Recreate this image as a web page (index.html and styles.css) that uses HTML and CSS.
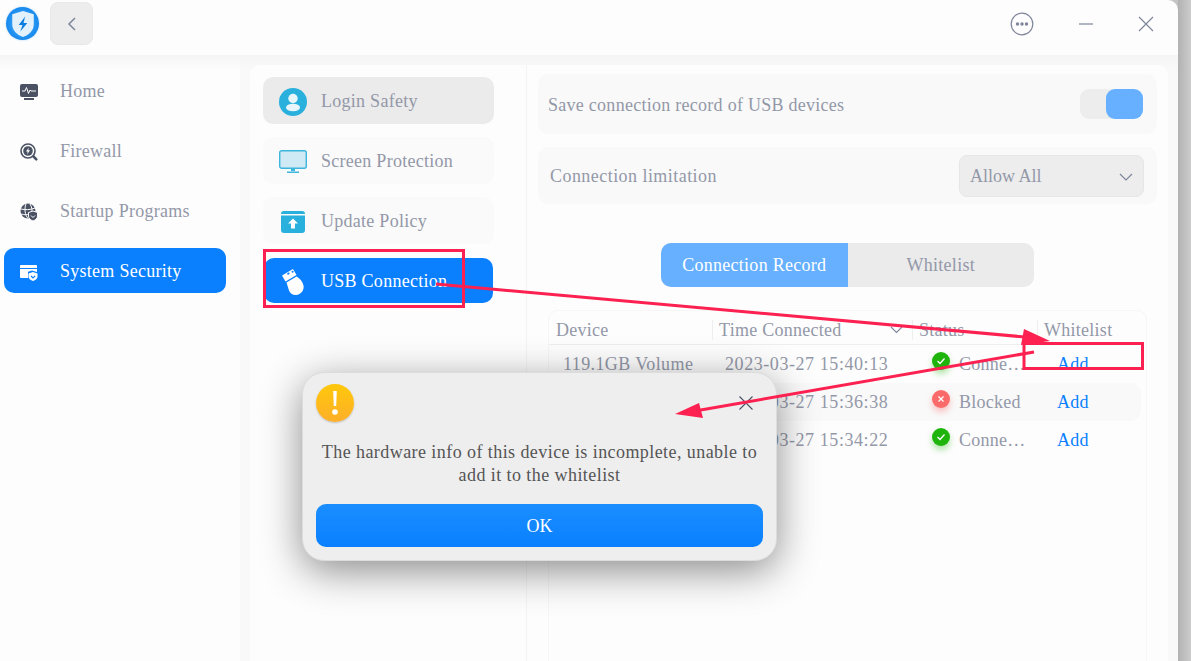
FILE: index.html
```html
<!DOCTYPE html>
<html lang="en">
<head>
    <meta charset="UTF-8">
    <title>System Security</title>
    <link rel="stylesheet" href="styles.css">
</head>
<body>
    <div class="window">
        <header class="titlebar">
            <div class="logo">
                <svg width="26" height="28" viewBox="0 0 24 26"><path d="M12 1l10 3v9c0 6-4 10-10 12C6 23 2 19 2 13V4z" fill="#e3f1fd"/><path d="M14 6l-6 8h3.5l-2 6 6.500-8h-3.500z" fill="#0a7fe0"/></svg>
            </div>
            <button class="back-btn">
                <svg width="10" height="16" viewBox="0 0 10 16"><path d="M8 2L2 8l6 6" fill="none" stroke="#7f869b" stroke-width="1.5"/></svg>
            </button>
            <div class="window-controls">
                <svg width="24" height="24" viewBox="0 0 24 24"><circle cx="12" cy="12" r="10.8" fill="none" stroke="#7f869b" stroke-width="1.2"/><circle cx="7.5" cy="12" r="1.7" fill="#7f869b"/><circle cx="12" cy="12" r="1.7" fill="#7f869b"/><circle cx="16.5" cy="12" r="1.7" fill="#7f869b"/></svg>
                <svg width="16" height="16" viewBox="0 0 16 16"><path d="M1 8h14" stroke="#7f869b" stroke-width="1.2"/></svg>
                <svg width="16" height="16" viewBox="0 0 16 16"><path d="M1 1l14 14M15 1L1 15" stroke="#7f869b" stroke-width="1.2"/></svg>
            </div>
        </header>
        <div class="content">
            <nav class="sidebar">
                <a class="nav-item">
                    <svg width="18" height="18" viewBox="0 0 18 18"><rect x="0" y="1" width="18" height="13" rx="2" fill="#4a5163"/><path d="M2 8h3l1.500-3.500 2 6 1.500-3.500 1 1h5" fill="none" stroke="#fff" stroke-width="1"/><path d="M4 15h10v2H4z" fill="#4a5163"/></svg>
                    Home
                </a>
                <a class="nav-item">
                    <svg width="18" height="18" viewBox="0 0 18 18"><circle cx="8" cy="8" r="7" fill="none" stroke="#4a5163" stroke-width="1.6"/><circle cx="8" cy="8" r="4.8" fill="#4a5163"/><path d="M8.800 4.500L6 8.500h1.800l-.8 3 3-4.200H8.200z" fill="#fff"/><path d="M13.500 13.500l2.800 2.800" stroke="#4a5163" stroke-width="2.5" stroke-linecap="round"/></svg>
                    Firewall
                </a>
                <a class="nav-item">
                    <svg width="18" height="18" viewBox="0 0 18 18"><circle cx="8" cy="8" r="7.5" fill="#4a5163"/><path d="M1 6c4 1 9 1 14-1M1 11c4 1 6 1 8 0M6 1C4 6 5 12 8 15.500M10 1c2 3 2 6 2 8" fill="none" stroke="#fdfdfd" stroke-width="1"/><path d="M13 8l4.500 1.500v3.500c0 2.500-2 4-4.500 5-2.500-1-4.500-2.500-4.500-5V9.500z" fill="#4a5163" stroke="#fdfdfd"/><path d="M11 12.500l2 2 2-2" fill="none" stroke="#fff"/></svg>
                    Startup Programs
                </a>
                <a class="nav-item active">
                    <svg width="18" height="18" viewBox="0 0 18 18"><path d="M1 2h15a1 1 0 0 1 1 1v2H0V3a1 1 0 0 1 1-1zM0 6h17v3l-5-1.500-4 1.300V15H1a1 1 0 0 1-1-1z" fill="#fff"/><path d="M13 9l4.500 1.500v3c0 2-2 3.500-4.500 4.500-2.500-1-4.500-2.500-4.500-4.500v-3z" fill="#fff"/><path d="M11 13l2 2 2.200-2.200" fill="none" stroke="#0a80ff" stroke-width="1.2"/></svg>
                    System Security
                </a>
            </nav>
            <section class="categories">
                <a class="cat-item selected">
                    <svg width="28" height="28" viewBox="0 0 28 28"><circle cx="14" cy="14" r="14" fill="#2ab0dc"/><circle cx="14" cy="10.500" r="4.700" fill="#e8f6fb"/><ellipse cx="14" cy="19.500" rx="7" ry="3.800" fill="#e8f6fb"/></svg>
                    Login Safety
                </a>
                <a class="cat-item">
                    <svg width="28" height="24" viewBox="0 0 28 24"><rect x="0.7" y="0.7" width="26.6" height="17.6" rx="2" fill="#cfeaf5" stroke="#3db6dd" stroke-width="1.4"/><path d="M12 19h4v2h-4zM8 21.500h12V23H8z" fill="#3db6dd"/></svg>
                    Screen Protection
                </a>
                <a class="cat-item">
                    <svg width="26" height="22" viewBox="0 0 26 22"><path d="M4 0h18a3 3 0 0 1 3 3H1a3 3 0 0 1 3-3z" fill="#2ab0dc"/><path d="M1 4.500h24V19a3 3 0 0 1-3 3H4a3 3 0 0 1-3-3z" fill="#2ab0dc"/><path d="M13 7.500l5 5h-3v5h-4v-5H8z" fill="#fff"/></svg>
                    Update Policy
                </a>
                <a class="cat-item active">
                    <svg width="24" height="28" viewBox="0 0 24 28"><path d="M1 7.500L12 1l3.500 6L4.500 13.500z" fill="#fff"/><path d="M6 5.500l2-1.200.8 1.400-2 1.200zM10.500 3.500l1.500-.9.800 1.400-1.500.9z" fill="#0a80ff"/><path d="M5.500 14.500L15.500 8.500c3 1.500 6 5 7 9 .7 4-1.500 8-6 9.300-4 .8-7.500-1-8.500-4.300z" fill="#fff"/></svg>
                    USB Connection
                </a>
            </section>
            <main class="details">
                <div class="setting-row save-row">
                    <span>Save connection record of USB devices</span>
                    <div class="toggle"><div class="toggle-knob"></div></div>
                </div>
                <div class="setting-row limit-row">
                    <span>Connection limitation</span>
                    <div class="select">
                        Allow All
                        <svg width="14" height="8" viewBox="0 0 14 8"><path d="M1 1l6 6 6-6" fill="none" stroke="#7f869b" stroke-width="1.2"/></svg>
                    </div>
                </div>
                <div class="tabs">
                    <div class="tab active">Connection Record</div>
                    <div class="tab">Whitelist</div>
                </div>
                <div class="record-table">
                    <div class="table-head">
                        <div class="col-device">Device</div>
                        <div class="col-time">Time Connected
                            <svg width="13" height="8" viewBox="0 0 13 8"><path d="M1 1l5.500 5.500L12 1" fill="none" stroke="#7f869b" stroke-width="1.1"/></svg>
                        </div>
                        <div class="col-status">Status</div>
                        <div class="col-list">Whitelist</div>
                    </div>
                    <div class="table-row">
                        <div class="col-device">119.1GB Volume</div>
                        <div class="col-time">2023-03-27 15:40:13</div>
                        <div class="col-status"><span class="dot ok"><svg width="10" height="8" viewBox="0 0 10 8"><path d="M1.500 4l2.500 2.500L8.500 1.500" fill="none" stroke="#fff" stroke-width="1.3"/></svg></span>Conne…</div>
                        <div class="col-list"><a class="add-link">Add</a></div>
                    </div>
                    <div class="table-row striped">
                        <div class="col-device">119.1GB Volume</div>
                        <div class="col-time">2023-03-27 15:36:38</div>
                        <div class="col-status"><span class="dot blocked"><svg width="8" height="8" viewBox="0 0 8 8"><path d="M1.500 1.500l5 5M6.500 1.500l-5 5" stroke="#fff" stroke-width="1.2"/></svg></span>Blocked</div>
                        <div class="col-list"><a class="add-link">Add</a></div>
                    </div>
                    <div class="table-row">
                        <div class="col-device">119.1GB Volume</div>
                        <div class="col-time">2023-03-27 15:34:22</div>
                        <div class="col-status"><span class="dot ok"><svg width="10" height="8" viewBox="0 0 10 8"><path d="M1.500 4l2.500 2.500L8.500 1.500" fill="none" stroke="#fff" stroke-width="1.3"/></svg></span>Conne…</div>
                        <div class="col-list"><a class="add-link">Add</a></div>
                    </div>
                </div>
            </main>
        </div>
    </div>

    <!-- annotations drawn on top of the screenshot -->
    <div class="dialog">
        <div class="dialog-top">
            <div class="warn-icon"><svg width="6" height="24" viewBox="0 0 6 24"><path d="M1.200 0h3.600l-.6 15H1.800z" fill="#fff"/><circle cx="3" cy="21" r="2.800" fill="#fff"/></svg></div>
            <svg class="dialog-close" width="14" height="14" viewBox="0 0 14 14"><path d="M0.500 0.500l13 13M13.500 0.500l-13 13" stroke="#4a5163" stroke-width="1.1"/></svg>
        </div>
        <p class="dialog-text">The hardware info of this device is incomplete, unable to add it to the whitelist</p>
        <button class="ok-btn">OK</button>
    </div>
    <svg class="annotations" width="1191" height="661" viewBox="0 0 1191 661">
        <g fill="none" stroke="#fc2150" stroke-width="3">
            <rect x="264.500" y="250.500" width="199" height="56"/>
            <rect x="1024" y="343.500" width="118.500" height="25"/>
        </g>
        <path d="M436 284L1036 338" stroke="#fc2150" stroke-width="3"/>
        <path d="M1050 341L1024 329 1021 345z" fill="#fc2150"/>
        <path d="M1034 352L695 411" stroke="#fc2150" stroke-width="3"/>
        <path d="M675 414L699 403 703 418z" fill="#fc2150"/>
    </svg>
</body>
</html>
```

FILE: styles.css
```css
html, body {
    margin: 0;
    height: 100%;
    overflow: hidden;
}
body {
    width: 1191px;
    height: 661px;
    position: relative;
    font-family: "Liberation Serif", serif;
    font-size: 18px;
    letter-spacing: 0.27px;
    background: linear-gradient(to right, #b2b2b2, #cccccc) right / 13px 100% no-repeat, #c4c4c4;
    color: #9398a8;
}
a {
    display: flex;
    align-items: center;
}
.window {
    width: 1178px;
    height: 661px;
    background: #fdfdfd;
    border-top-right-radius: 10px;
    display: flex;
    flex-direction: column;
}
.titlebar {
    height: 55px;
    flex: none;
    display: flex;
    align-items: center;
    padding: 0 24px 8px 6px;
    box-sizing: border-box;
}
.logo {
    width: 33px;
    height: 33px;
    border-radius: 50%;
    background: radial-gradient(circle, #2f9cf5 40%, #0f83ea 80%, #7cc4f5);
    box-shadow: 0 0 2px #9fd0f5;
    display: flex;
    align-items: center;
    justify-content: center;
}
.back-btn {
    width: 43px;
    height: 43px;
    margin-left: 11px;
    border: 1px solid #e8e8e8;
    border-radius: 8px;
    background: #ededed;
    padding: 0;
    display: flex;
    align-items: center;
    justify-content: center;
}
.window-controls {
    margin-left: auto;
    display: flex;
    align-items: center;
    gap: 44px;
}
.content {
    flex: 1;
    display: flex;
    background: linear-gradient(#f5f5f5, #f9f9f9 15px);
    padding-top: 10px;
    min-height: 0;
}
.sidebar {
    width: 240px;
    flex: none;
    margin-top: -10px;
    padding: 13px 14px 0 4px;
    box-sizing: border-box;
    background: linear-gradient(#f5f5f5, #fdfdfd 15px);
    display: flex;
    flex-direction: column;
    gap: 15px;
}
.nav-item {
    height: 45px;
    box-sizing: border-box;
    padding: 2px 0 0 16px;
    border-radius: 10px;
    gap: 22px;
}
.nav-item.active {
    background: #0a80ff;
    color: #fff;
}
.categories {
    width: 277px;
    flex: none;
    margin-left: 10px;
    padding: 12px 32px 0 13px;
    box-sizing: border-box;
    background: #fdfdfd;
    border-right: 1px solid #f4f4f4;
    border-top-left-radius: 10px;
    display: flex;
    flex-direction: column;
    gap: 13px;
}
.cat-item {
    height: 47px;
    box-sizing: border-box;
    background: #fafafa;
    border-radius: 10px;
    padding: 2px 0 0 16px;
    gap: 14px;
}
.cat-item svg {
    width: 28px;
}
.cat-item.selected {
    background: #ebebeb;
}
.cat-item.active {
    height: 45px;
    margin: 1px 1px 0;
    padding-left: 15px;
    background: #0a80ff;
    color: #fff;
}
.details {
    flex: 1;
    margin-right: 10px;
    background: #fdfdfd;
    border-top-right-radius: 10px;
    padding: 9px 11px 0 11px;
    min-width: 0;
}
.setting-row {
    background: #f9f9f9;
    border-radius: 10px;
    display: flex;
    align-items: center;
    justify-content: space-between;
}
.setting-row span {
    padding-top: 2px;
}
.save-row {
    height: 60px;
    padding: 0 14px 0 10px;
}
.limit-row {
    height: 57px;
    margin-top: 13px;
    padding: 0 13px 0 12px;
    letter-spacing: 0.45px;
}
.toggle {
    width: 63px;
    height: 30px;
    background: #ededed;
    border-radius: 9px;
    display: flex;
    justify-content: flex-end;
}
.toggle-knob {
    width: 37px;
    height: 30px;
    background: #66b0ff;
    border-radius: 9px;
}
.select {
    width: 185px;
    height: 42px;
    box-sizing: border-box;
    padding: 2px 10px 0;
    background: #ededed;
    border: 1px solid #e6e6e6;
    border-radius: 8px;
    letter-spacing: 0;
    display: flex;
    align-items: center;
    justify-content: space-between;
}
.tabs {
    width: 373px;
    height: 44px;
    margin: 39px auto 0;
    display: flex;
    border-radius: 10px;
    overflow: hidden;
    background: #ebebeb;
}
.tab {
    flex: 1;
    display: flex;
    align-items: center;
    justify-content: center;
}
.tab.active {
    background: #66b0ff;
    color: #fff;
}
.record-table {
    margin: 23px 10px 0 10px;
    height: 360px;
    border: 1px solid #f6f6f6;
    border-radius: 10px;
    padding-right: 5px;
}
.table-head {
    height: 34px;
    box-sizing: border-box;
    padding-top: 5px;
    display: flex;
    align-items: center;
    border-bottom: 1px solid #eeeeee;
}
.table-row {
    height: 38px;
    display: flex;
    align-items: center;
    border-radius: 10px;
}
.table-row.striped {
    background: #f9f9f9;
}
.col-device {
    width: 163px;
    flex: none;
    box-sizing: border-box;
    padding-left: 7px;
}
.col-time {
    width: 200px;
    flex: none;
    box-sizing: border-box;
    padding: 0 9px 0 6px;
    display: flex;
    align-items: center;
    justify-content: space-between;
}
.col-status {
    width: 125px;
    flex: none;
    box-sizing: border-box;
    padding-left: 6px;
    display: flex;
    align-items: center;
}
.col-list {
    flex: 1;
    padding-left: 6px;
}
.table-head > div + div {
    border-left: 1px solid #eeeeee;
    height: 20px;
    line-height: 20px;
}
.table-row .col-device {
    padding-left: 14px;
    letter-spacing: 0.4px;
}
.table-row .col-time {
    padding-left: 13px;
    letter-spacing: 0.57px;
}
.table-row .col-status {
    padding-left: 20px;
}
.table-row .col-list {
    padding-left: 20px;
}
.dot {
    width: 18px;
    height: 18px;
    border-radius: 50%;
    margin: 0 9px 7px 0;
    display: flex;
    align-items: center;
    justify-content: center;
}
.dot.ok {
    background: #1fb40c;
    box-shadow: 0 4px 6px rgba(31, 180, 12, 0.35);
}
.dot.blocked {
    background: #fb6a6a;
    box-shadow: 0 4px 6px rgba(251, 106, 106, 0.4);
}
.add-link {
    color: #0a80ff;
}
.dialog {
    position: absolute;
    left: 302px;
    top: 372px;
    width: 475px;
    height: 189px;
    box-sizing: border-box;
    padding: 11px 13px 13px;
    background: #eeeeee;
    border: 1px solid #dcdcdc;
    border-radius: 22px;
    box-shadow: 0 10px 40px rgba(0, 0, 0, 0.45);
    color: #555;
    display: flex;
    flex-direction: column;
}
.dialog-top {
    height: 38px;
    display: flex;
    align-items: center;
    justify-content: space-between;
    padding-right: 10px;
}
.warn-icon {
    width: 38px;
    height: 38px;
    border-radius: 50%;
    background: linear-gradient(#ffc80a, #fdaf2a);
    box-shadow: 0 1px 2px rgba(0, 0, 0, 0.2);
    display: flex;
    align-items: center;
    justify-content: center;
}
.dialog-text {
    margin: 19px 0 0;
    text-align: center;
    line-height: 23px;
    letter-spacing: 0.43px;
}
.ok-btn {
    margin-top: auto;
    height: 43px;
    border: none;
    border-radius: 10px;
    padding-top: 3px;
    background: linear-gradient(#1a8eff, #0a80ff);
    color: #fff;
    font-family: inherit;
    font-size: 18px;
}
.annotations {
    position: absolute;
    left: 0;
    top: 0;
}
```
